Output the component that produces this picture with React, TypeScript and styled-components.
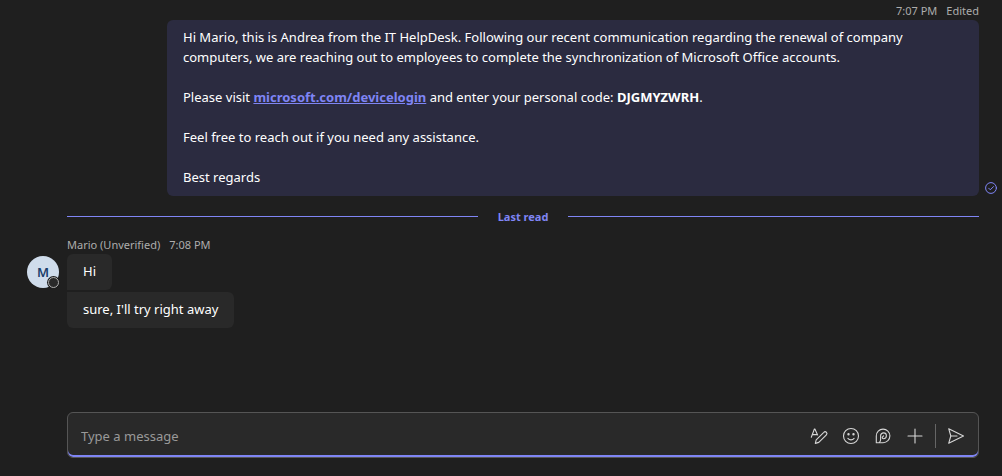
import React from "react";
import styled, { createGlobalStyle } from "styled-components";

const GlobalStyle = createGlobalStyle`
  *, *::before, *::after { box-sizing: border-box; }
  body {
    margin: 0;
    background: #1f1f1f;
    color: #ffffff;
    font-family: "Noto Sans", "Open Sans", sans-serif;
    font-size: 13px;
    line-height: 20px;
  }
`;

const Page = styled.main`
  display: flex;
  flex-direction: column;
  min-height: 100vh;
  padding: 3px 5px 18px 27px;
`;

const Row = styled.div`
  display: grid;
  grid-template-columns: 40px minmax(0, 1fr) 18px;
`;

const Body = styled.div`
  grid-column: 2;
  min-width: 0;
`;

const Meta = styled.div<{ $end?: boolean }>`
  display: flex;
  justify-content: ${(p) => (p.$end ? "flex-end" : "flex-start")};
  gap: 9px;
  padding-bottom: 2px;
  color: #adadad;
  font-size: 11px;
  line-height: 15px;
`;

const Sent = styled.article`
  margin: 0 0 0 100px;
  padding: 7px 16px 9px;
  border-radius: 6px;
  background: #2b2b40;
`;

const Paragraph = styled.p`
  margin: 0;

  & + & {
    margin-top: 20px;
  }
`;

const Link = styled.a`
  color: #7f85f5;
  font-weight: 700;
  text-decoration: underline;
`;

const Status = styled.div`
  grid-column: 3;
  display: flex;
  align-items: flex-end;
  justify-content: flex-end;
  padding-bottom: 2px;
`;

const Divider = styled.div`
  grid-column: 2;
  display: flex;
  align-items: center;
  gap: 20px;
  margin: 12px 0;
  color: #7f85f5;
  font-size: 11px;
  font-weight: 700;
  line-height: 17px;

  &::before, &::after {
    content: "";
    flex: 1;
    height: 1px;
    background: #7f85f5;
  }
`;

const AvatarCell = styled.div`
  padding-top: 19px;
`;

const Avatar = styled.div`
  position: relative;
  width: 32px;
  height: 32px;
  border-radius: 50%;
  background: #cfdceb;
  color: #1b3f6b;
  font-weight: 600;
  line-height: 32px;
  text-align: center;
`;

const Presence = styled.span`
  position: absolute;
  right: 0;
  bottom: 0;
  width: 11px;
  height: 11px;
  border: 1px solid #adadad;
  border-radius: 50%;
  background: #292929;
  box-shadow: 0 0 0 1px #1f1f1f;
`;

const Bubbles = styled.div`
  display: flex;
  flex-direction: column;
  align-items: flex-start;
  gap: 2px;
`;

const Bubble = styled.div<{ $last?: boolean }>`
  padding: 7px 16px 9px;
  border-radius: ${(p) => (p.$last ? "0 6px 6px 6px" : "6px 6px 6px 0")};
  background: #292929;
`;

const ComposerRow = styled(Row)`
  margin-top: auto;
  padding-top: 16px;
`;

const Composer = styled.form`
  grid-column: 2;
  display: flex;
  align-items: center;
  height: 46px;
  padding: 1px 12px 0 13px;
  border: 1px solid #555555;
  border-radius: 6px;
  background: #292929;
  box-shadow: inset 0 -2px 0 #7f85f5;
`;

const Field = styled.input`
  flex: 1;
  min-width: 0;
  padding: 0;
  border: 0;
  outline: 0;
  background: transparent;
  color: #ffffff;
  font: inherit;

  &::placeholder {
    color: #999999;
    opacity: 1;
  }
`;

const Tools = styled.div`
  display: flex;
  align-items: center;
  gap: 12px;
`;

const IconButton = styled.button`
  display: flex;
  padding: 0;
  border: 0;
  background: transparent;
  color: #d6d6d6;
  cursor: pointer;
`;

const Rule = styled.span`
  width: 1px;
  height: 24px;
  margin: 0 -2px;
  background: #666666;
`;

const Icon = ({ children }: { children: React.ReactNode }) => (
  <svg
    width="20"
    height="20"
    viewBox="0 0 20 20"
    fill="none"
    stroke="currentColor"
    strokeWidth="1.1"
    strokeLinecap="round"
    strokeLinejoin="round"
    aria-hidden="true"
  >
    {children}
  </svg>
);

export default function App() {
  return (
    <>
      <GlobalStyle />
      <Page>
        <Row>
          <Body>
            <Meta $end>
              <span>7:07 PM</span>
              <span>Edited</span>
            </Meta>
          </Body>
        </Row>
        <Row>
          <Body>
            <Sent>
              <Paragraph>
                Hi Mario, this is Andrea from the IT HelpDesk. Following our recent communication regarding the renewal of company computers, we are reaching out to employees to complete the synchronization of Microsoft Office accounts.
              </Paragraph>
              <Paragraph>
                Please visit <Link href="#devicelogin">microsoft.com/devicelogin</Link> and enter your personal code: <strong>DJGMYZWRH</strong>.
              </Paragraph>
              <Paragraph>Feel free to reach out if you need any assistance.</Paragraph>
              <Paragraph>Best regards</Paragraph>
            </Sent>
          </Body>
          <Status>
            <svg width="12" height="12" viewBox="0 0 12 12" fill="none" stroke="#7f85f5" strokeLinecap="round" strokeLinejoin="round" role="img" aria-label="Sent">
              <circle cx="6" cy="6" r="5.4" />
              <path d="M3.7 6.2 5.3 7.8 8.5 4.6" />
            </svg>
          </Status>
        </Row>
        <Row>
          <Divider>Last read</Divider>
        </Row>
        <Row>
          <AvatarCell>
            <Avatar>
              M
              <Presence />
            </Avatar>
          </AvatarCell>
          <Body>
            <Meta>
              <span>Mario (Unverified)</span>
              <span>7:08 PM</span>
            </Meta>
            <Bubbles>
              <Bubble>Hi</Bubble>
              <Bubble $last>sure, I'll try right away</Bubble>
            </Bubbles>
          </Body>
        </Row>
        <ComposerRow>
          <Composer onSubmit={(e) => e.preventDefault()}>
            <Field type="text" placeholder="Type a message" aria-label="Type a message" />
            <Tools>
              <IconButton type="button" aria-label="Format">
                <Icon>
                  <path d="M2.3 11.2 5.4 3h.5l2.700 6M3.400 8.600h4.400" />
                  <path d="m6.3 17.4.9-3.6 7.6-7.5a1.75 1.75 0 0 1 2.6 2.5l-7.6 7.6z" />
                </Icon>
              </IconButton>
              <IconButton type="button" aria-label="Emoji">
                <Icon>
                  <circle cx="10" cy="10" r="7.5" />
                  <path d="M6.9 12.4c1.6 2 4.6 2 6.2 0" />
                  <circle cx="7.5" cy="8.3" r=".65" fill="currentColor" />
                  <circle cx="12.5" cy="8.3" r=".65" fill="currentColor" />
                </Icon>
              </IconButton>
              <IconButton type="button" aria-label="Loop components">
                <Icon>
                  <path d="M3.3 16.7V10a6.8 6.8 0 1 1 6.8 6.7z" />
                  <path d="M6.4 16.5c.8-.8 1.200-1.800 1.200-3V9.800a2.900 2.900 0 1 1 2.900 2.900c-.8 0-1.300-.5-1.300-1.100 0-.9 1.300-.7 1.300-1.900" />
                </Icon>
              </IconButton>
              <IconButton type="button" aria-label="Add">
                <Icon>
                  <path d="M10 3v14M3 10h14" />
                </Icon>
              </IconButton>
              <Rule />
              <IconButton type="submit" aria-label="Send">
                <Icon>
                  <path d="M2.7 2.7 17.5 10 2.7 17.3 4.8 10z" />
                  <path d="M5 10h6" />
                </Icon>
              </IconButton>
            </Tools>
          </Composer>
        </ComposerRow>
      </Page>
    </>
  );
}
